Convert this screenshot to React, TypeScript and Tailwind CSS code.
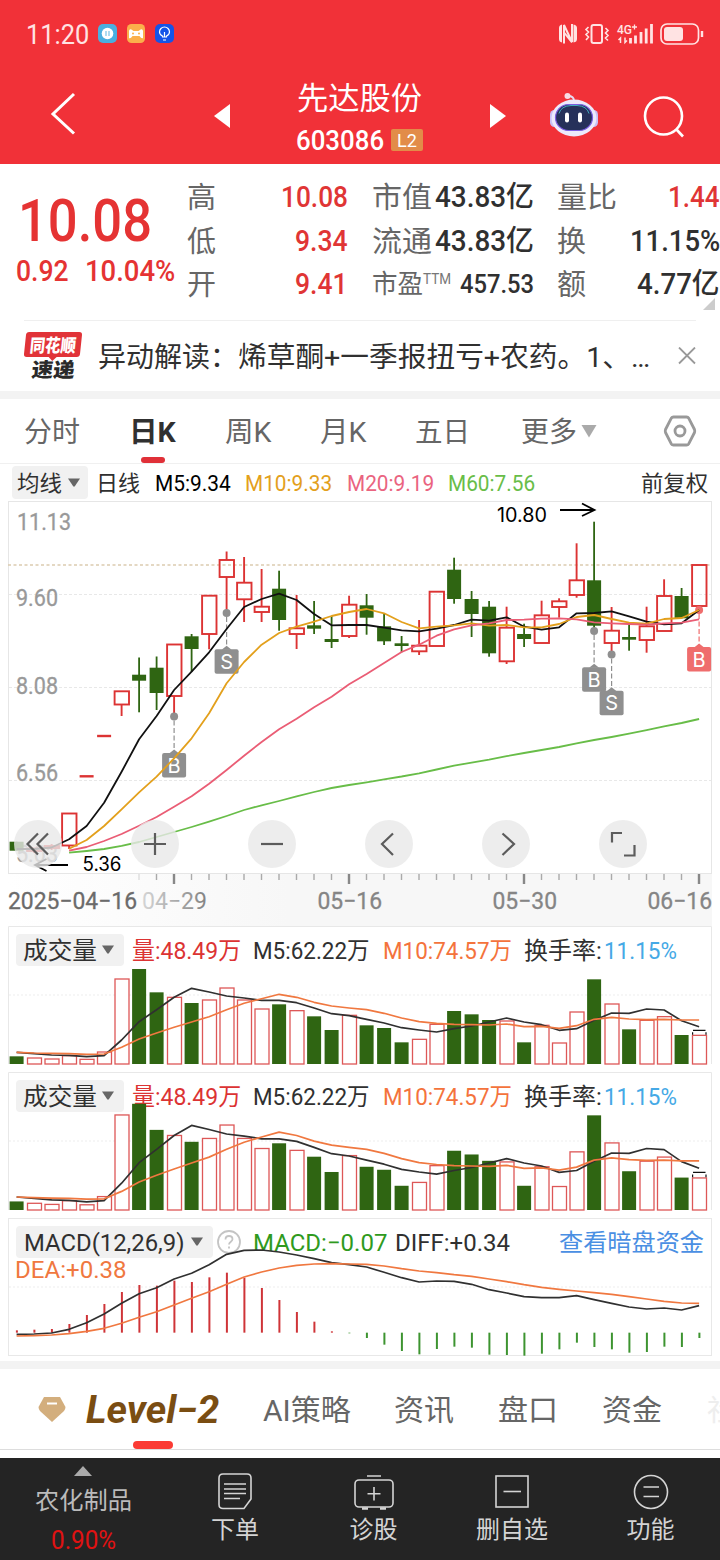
import { useLayoutEffect, useRef, useState, type ReactNode } from "react";

/* Text squeezed or stretched horizontally so that it fills the width of its box. */
function Fit({ className = "", children }: { className?: string; children: ReactNode }) {
  const box = useRef<HTMLSpanElement>(null);
  const text = useRef<HTMLSpanElement>(null);
  const [scale, setScale] = useState(1);
  useLayoutEffect(() => {
    if (box.current && text.current && text.current.offsetWidth > 0) {
      setScale(box.current.clientWidth / text.current.offsetWidth);
    }
  }, []);
  return (
    <span ref={box} className={`block shrink-0 whitespace-nowrap ${className}`}>
      <span ref={text} className="inline-block origin-left translate-y-px align-top" style={{ transform: `scaleX(${scale})` }}>
        {children}
      </span>
    </span>
  );
}

const RED = "#dc3333";
const GREEN = "#2f6512";
const cx = (i: number) => 16.6 + 17.5 * i;
const line = (ys: number[], start = 0) =>
  ys.map((y, i) => `${cx(i + start).toFixed(1)},${y.toFixed(1)}`).join(" ");

/* kind, body top, body bottom, wick top, wick bottom */
type Candle = ["r" | "g", number, number, number, number];
const candles: Candle[] = [
  ["g", 841.7, 850.7, 841.7, 850.7],
  ["r", 848.5, 851, 848, 853],
  ["r", 846, 848, 844, 850],
  ["r", 813.5, 845.5, 813.5, 849],
  ["r", 776.3, 776.3, 776.3, 776.3],
  ["r", 736, 736, 736, 736],
  ["r", 691.3, 704.5, 691.3, 716],
  ["g", 674.7, 680.7, 657.5, 712.3],
  ["g", 667.7, 693, 656.5, 710],
  ["r", 644.5, 696, 644.5, 716.5],
  ["g", 636.3, 649, 634, 672],
  ["r", 595.7, 634, 595.7, 649.3],
  ["r", 560, 577, 551.5, 613],
  ["r", 582.7, 599.3, 557, 622],
  ["r", 606.7, 612, 569, 622],
  ["g", 588.7, 620, 570.7, 630.7],
  ["r", 628.3, 634, 595, 649],
  ["g", 625.3, 628.7, 601, 634],
  ["g", 639, 642, 616, 648],
  ["r", 604.7, 636, 595.7, 638],
  ["g", 605.3, 617.7, 594, 634.7],
  ["g", 626.3, 641.3, 614, 645],
  ["g", 643.3, 646, 636, 652.3],
  ["r", 645.7, 651.3, 620, 655],
  ["r", 591.7, 646, 591.7, 646],
  ["g", 569.7, 599, 557.7, 603.7],
  ["g", 599, 614, 591, 637],
  ["g", 606.7, 653.3, 601, 656.7],
  ["r", 627.7, 661.3, 606.7, 664],
  ["g", 634, 639, 623.7, 647],
  ["r", 615.3, 643, 600.7, 643],
  ["r", 601.3, 607, 598.3, 617.7],
  ["r", 580.3, 595, 543.3, 597.7],
  ["g", 580.3, 625.7, 521.7, 630.7],
  ["r", 630.7, 643, 607, 653.7],
  ["g", 637, 639.7, 624.7, 650.7],
  ["r", 626.3, 640, 606.7, 652.7],
  ["r", 596, 631, 579.3, 631],
  ["g", 596, 618.3, 588, 618.3],
  ["r", 565, 606, 565, 610],
];

const ma5 = [849, 849, 847.5, 839.3, 826, 802.7, 771.7, 739.3, 716, 690, 671.7, 652.3, 629, 607, 599, 593.7, 600, 614, 625.3, 625, 625, 627.7, 630.3, 631.3, 628.7, 625, 619.7, 620.7, 617.3, 626.7, 629.7, 627.3, 613.3, 613, 611.3, 616.3, 621.7, 624.3, 623.3, 610];
const ma10 = [848.7, 840, 826, 809.3, 792.3, 776.7, 758.3, 738.3, 713.3, 683.3, 662, 644.7, 633, 626.7, 621.7, 616, 612, 609, 613.3, 622, 628.3, 626.7, 625.3, 623.3, 625.7, 625, 627.3, 627.3, 624, 617, 615, 619, 622.7, 623.7, 619, 618, 610];
const ma20 = [850.7, 847, 841, 834, 825.7, 817, 806.7, 796.3, 783.7, 770, 755.7, 742, 729.3, 718.7, 707.3, 696.7, 684.3, 674, 663, 652, 644.7, 635.7, 629.3, 625.3, 623.3, 620, 619.7, 618.7, 618.3, 619.3, 622.3, 623.3, 624, 624.7, 623.3, 622.7, 619.3];
const ma60 = [852.7, 851, 849, 845.8, 842, 837, 832, 827, 821.7, 816, 810, 805.3, 801, 796.3, 792, 788, 785, 782.3, 779.3, 776.5, 773.3, 769.5, 765.7, 762.6, 759.7, 756.2, 753, 750, 747, 743.3, 740, 737, 733.7, 730.2, 726.3, 723, 719];

function Marker({ i, y, top, label, color = "#8f8f8f" }: { i: number; y: number; top: number; label: string; color?: string }) {
  const x = cx(i);
  return (
    <g>
      <circle cx={x} cy={y} r="4" fill={color} />
      <line x1={x} x2={x} y1={y + 4} y2={top} stroke={color} strokeWidth="1.2" strokeDasharray="5 2.5" />
      <path d={`M${x - 5} ${top + 0.5}L${x} ${top - 3.5}L${x + 5} ${top + 0.5}Z`} fill={color} />
      <rect x={x - 12} y={top} width="24" height="24.5" rx="2" fill={color} />
      <text x={x} y={top + 19.5} textAnchor="middle" fill="#fff" className="font-[Inter,Roboto,sans-serif] text-[20px]">
        {label}
      </text>
    </g>
  );
}

function PriceChart() {
  const axis: [string, number, number, number][] = [
    ["11.13", 17, 530, 54],
    ["9.60", 16, 606, 42],
    ["8.08", 16, 693.5, 42],
    ["6.56", 16, 780.5, 42],
    ["5.03", 16, 862, 42],
  ];
  const dates: [string, number][] = [["05-16", 317.5], ["05-30", 492.5], ["06-16", 647.5]];
  return (
    <svg viewBox="0 501 720 425" className="block h-[425px] w-full font-[Roboto,sans-serif]">
      <defs>
        <linearGradient id="fade" x1="0" x2="1" y1="0" y2="0">
          <stop offset="0" stopColor="#ffffff" />
          <stop offset="0.4" stopColor="#f7f7f7" />
          <stop offset="1" stopColor="#f7f7f7" />
        </linearGradient>
        <linearGradient id="dateFade" gradientUnits="userSpaceOnUse" x1="140" x2="205" y1="0" y2="0">
          <stop offset="0" stopColor="#d8d8d8" />
          <stop offset="1" stopColor="#858585" />
        </linearGradient>
      </defs>
      <rect x="8" y="874" width="704" height="52" fill="url(#fade)" />
      <rect x="8.5" y="501.5" width="703" height="372" fill="none" stroke="#e6e6e6" />
      {[594.5, 687.5, 780.5].map((y) => (
        <line key={y} x1="9" x2="711" y1={y} y2={y} stroke="#e8e8e8" strokeDasharray="3 2" />
      ))}
      <line x1="8" x2="712" y1="565" y2="565" stroke="#dccbb0" strokeWidth="1.6" strokeDasharray="3 2.5" />
      <g className="text-[23px]" fill="#999" stroke="#999" strokeWidth="0.3">
        {axis.map(([t, x, y, w]) => (
          <text key={t} x={x} y={y} textLength={w} lengthAdjust="spacingAndGlyphs">
            {t}
          </text>
        ))}
      </g>
      {candles.map(([k, t, b, wt, wb], i) => {
        const x = cx(i);
        const color = k === "r" ? RED : GREEN;
        if (k === "g") {
          return (
            <g key={i} fill={color}>
              <rect x={x - 0.9} y={wt} width="1.8" height={wb - wt} />
              <rect x={x - 7} y={t} width="14" height={b - t} />
            </g>
          );
        }
        if (t === b) return <rect key={i} x={x - 7} y={t - 1.2} width="14" height="2.4" fill={color} />;
        return (
          <g key={i} stroke={color} strokeWidth="1.9" fill="none">
            {wt < t && <line x1={x} x2={x} y1={wt} y2={t} />}
            {wb > b && <line x1={x} x2={x} y1={b} y2={wb} />}
            <rect x={x - 7} y={t} width="14.4" height={b - t} />
          </g>
        );
      })}
      <Marker i={12} y={613} top={649.3} label="S" />
      <Marker i={9} y={716.5} top={753} label="B" />
      <Marker i={33} y={631} top={667.3} label="B" />
      <Marker i={34} y={654.5} top={690.8} label="S" />
      <Marker i={39} y={610} top={647} label="B" color="#ef6d6d" />
      <g fill="none" strokeWidth="1.8" strokeLinejoin="round">
        <polyline points={line(ma5)} stroke="#111" />
        <polyline points={line(ma10, 3)} stroke="#e3a01c" />
        <polyline points={line(ma20, 3)} stroke="#ea5d75" />
        <polyline points={line(ma60, 3)} stroke="#68bd48" />
      </g>
      <g stroke="#000" strokeWidth="1.8" fill="none">
        <path d="M560 510H594M582 503.5L594.5 510L582 516" />
        <path d="M68 865H35M46.5 859L35 865L46.5 871" />
      </g>
      <g fill="#000" className="font-[Inter,sans-serif] text-[19.5px]">
        <text x="497" y="521.5" textLength="50" lengthAdjust="spacingAndGlyphs">10.80</text>
        <text x="82.5" y="871" textLength="39" lengthAdjust="spacingAndGlyphs">5.36</text>
      </g>
      {candles.map((_, i) => {
        if (i < 7) return null;
        const major = i % 10 === 9;
        return (
          <rect
            key={i}
            x={cx(i) - (major ? 1.3 : 0.8)}
            y="874"
            width={major ? 2.4 : 1.4}
            height={major ? 10 : 6}
            fill={major ? "#888" : i === 7 ? "#ddd" : "#aaa"}
          />
        );
      })}
      <g className="text-[23px]" fill="#858585">
        <text x="8" y="909" textLength="129" lengthAdjust="spacingAndGlyphs" fill="#6b6b6b" stroke="#6b6b6b" strokeWidth="0.3">2025−04−16</text>
        <text x="142" y="909" textLength="65" lengthAdjust="spacingAndGlyphs" fill="url(#dateFade)">04−29</text>
        {dates.map(([t, x]) => (
          <text key={t} x={x} y="909" textLength="64.5" lengthAdjust="spacingAndGlyphs" stroke="#858585" strokeWidth="0.3">
            {t.replace("-", "−")}
          </text>
        ))}
      </g>
    </svg>
  );
}

function ChartButton({ d }: { d: string }) {
  return (
    <button className="flex size-12 items-center justify-center rounded-full bg-[#e8e8e8]/80">
      <svg viewBox="0 0 48 48" className="size-12" fill="none" stroke="#5c5c5c" strokeWidth="2.2">
        <path d={d} />
      </svg>
    </button>
  );
}

/* Bar tops and moving averages, in thirds of a pixel below the panel's upper edge. */
const VOL_BASE = 432;
const volKinds = "grrrrrrggrgrrrrgrggrgggrrgggrgrrrgrgrrgr";
const volTops = [409, 414, 417, 407, 418, 396, 177, 147, 217, 232, 249, 240, 204, 240, 267, 253, 272, 289, 330, 286, 316, 324, 367, 358, 313, 273, 283, 300, 303, 367, 316, 369, 276, 178, 252, 328, 301, 290, 345, 346];
const volMa5 = [397, 401, 405, 406, 410, 407, 360, 305, 269, 232, 205, 216, 228, 234, 241, 241, 248, 264, 281, 287, 298, 309, 323, 330, 336, 326, 318, 306, 294, 306, 314, 331, 326, 301, 279, 280, 267, 270, 302, 320];
const volMa10 = [397, 399, 400, 401, 403, 402, 382, 357, 339, 322, 306, 290, 269, 250, 236, 223, 232, 247, 258, 264, 269, 280, 294, 305, 310, 313, 314, 315, 312, 320, 319, 325, 317, 298, 292, 297, 299, 298, 300, 300];

function VolumePanel({ scale }: { scale: number }) {
  const base = 138;
  const at = (v: number) => base - ((VOL_BASE - v) / 3) * scale;
  return (
    <section className="relative h-[146px] pt-2">
      <div className="flex h-8 items-center text-[24px] leading-8 text-[#303030]">
        <div className="ml-4 flex h-8 w-[108px] items-center rounded bg-[#f1f1f1] pl-[7px]">
          <Fit className="w-[74px]">成交量</Fit>
          <Caret className="ml-[4px]" />
        </div>
        <Fit className="ml-2 w-[109px] text-[#dc3333]">量:48.49万</Fit>
        <Fit className="ml-[12px] w-[117px]">M5:62.22万</Fit>
        <Fit className="ml-[13px] w-[129px] text-[#f4733c]">M10:74.57万</Fit>
        <Fit className="ml-[12px] w-[78px]">换手率:</Fit>
        <Fit className="ml-[2px] w-[73px] text-[#45a9e6]">11.15%</Fit>
      </div>
      <svg viewBox="0 0 720 146" className="absolute inset-0 h-[146px] w-full">
        <path d="M8.5 138V0.5H711.5V138" fill="none" stroke="#e8e8e8" />
        <line x1="9" x2="711" y1="69" y2="69" stroke="#ededed" strokeDasharray="2 2" />
        {volTops.map((v, i) =>
          volKinds[i] === "g" ? (
            <rect key={i} x={cx(i) - 7} y={at(v)} width="14" height={base - at(v)} fill={GREEN} />
          ) : (
            <rect key={i} x={cx(i) - 6.6} y={at(v)} width="14" height={base - at(v)} fill="#fff" stroke="#dd5757" strokeWidth="1.3" />
          ),
        )}
        <path d={`M692.6 ${at(344)}V${at(337)}M706 ${at(344)}V${at(337)}M693 ${at(331)}H705.5`} stroke="#111" strokeWidth="1.2" />
        <g fill="none" strokeWidth="1.7" strokeLinejoin="round">
          <polyline points={line(volMa5.map(at))} stroke="#303030" />
          <polyline points={line(volMa10.map(at))} stroke="#f07840" />
        </g>
      </svg>
    </section>
  );
}

const macdTops = [346, 344, 342, 327, 300, 267, 231, 210, 212, 197, 201, 187, 173, 188, 219, 255, 291, 320, 349, 355, 369, 389, 408, 418, 402, 395, 398, 419, 420, 422, 416, 403, 383, 396, 403, 413, 411, 395, 396, 369];
const diff = [358, 357, 354, 343, 323, 297, 265, 236, 218, 192, 175, 149, 118, 106, 105, 111, 120, 131, 143, 149, 156, 172, 188, 201, 198, 199, 208, 224, 234, 245, 248, 248, 242, 254, 265, 276, 282, 279, 285, 272];
const dea = [363, 362, 360, 356, 349, 340, 325, 307, 290, 270, 250, 230, 208, 186, 171, 159, 151, 147, 146, 147, 148, 153, 161, 168, 173, 179, 184, 192, 200, 209, 217, 223, 228, 233, 238, 245, 252, 259, 264, 265];

function MacdPanel() {
  const at = (v: number) => v / 3 - 3;
  return (
    <section className="relative h-[143px] pt-2">
      <div className="flex h-8 items-center text-[24px] leading-8 text-[#303030]">
        <div className="ml-4 flex h-8 w-[197px] items-center rounded bg-[#f1f1f1] pl-2">
          <Fit className="w-[161px]">MACD(12,26,9)</Fit>
          <Caret className="ml-[5px]" />
        </div>
        <svg viewBox="0 0 24 24" className="ml-1 size-6 shrink-0" fill="none" stroke="#c4c4c4" strokeWidth="1.8">
          <circle cx="12" cy="12" r="11" />
          <path d="M8.5 9.5C8.5 7.3 10 6 12 6S15.5 7.3 15.5 9.2C15.5 11.6 12 11.8 12 14.5M12 16.5V18.4" />
        </svg>
        <Fit className="ml-3 w-[134px] text-[#2f9a20]">MACD:−0.07</Fit>
        <Fit className="ml-[8px] w-[115px]">DIFF:+0.34</Fit>
        <Fit className="ml-[49px] w-[145px] text-[#4a8fe3]">查看暗盘资金</Fit>
      </div>
      <Fit className="ml-[15px] w-[112px] text-[23px] leading-[23px] text-[#f07840]">DEA:+0.38</Fit>
      <svg viewBox="0 0 720 143" className="absolute inset-0 h-[143px] w-full">
        <rect x="8.5" y="0.5" width="703" height="137" fill="none" stroke="#e8e8e8" />
        <line x1="9" x2="711" y1="69" y2="69" stroke="#ededed" strokeDasharray="2 2" />
        {macdTops.map((v, i) => (
          <line key={i} x1={cx(i) + 0.3} x2={cx(i) + 0.3} y1={at(353)} y2={at(v)} stroke={v < 353 ? "#cf3438" : "#3d9430"} strokeWidth="2" />
        ))}
        <g fill="none" strokeWidth="1.7" strokeLinejoin="round">
          <polyline points={line(diff.map(at))} stroke="#303030" />
          <polyline points={line(dea.map(at))} stroke="#f07840" />
        </g>
      </svg>
    </section>
  );
}

function Caret({ className = "" }: { className?: string }) {
  return (
    <svg viewBox="0 0 14 10" className={`h-[10px] w-[14px] shrink-0 ${className}`}>
      <path d="M1 0.5H13L8 8.1Q7 9.3 6 8.1Z" fill="#666" />
    </svg>
  );
}

function StatusBar() {
  return (
    <div className="flex h-[68px] items-center text-[#ffe3e3]">
      <Fit className="ml-[26px] w-[63px] text-[27px] leading-8">11:20</Fit>
      <svg viewBox="0 0 76 20" className="ml-[9px] h-5 w-[76px]">
        <rect width="19" height="19" rx="5" fill="#4aafe0" />
        <circle cx="9.5" cy="9.5" r="5.8" fill="#fff" />
        <path d="M8 7V12M11 7V12" stroke="#8ecdea" strokeWidth="1.4" />
        <rect x="29" width="18" height="19" rx="4.5" fill="#fbb04b" />
        <path d="M31 14V7Q31 5 33 5.2L35.5 7H40.5L43 5.2Q45 5 45 7V14Q43.5 15 41.5 12H34.5Q32.5 15 31 14Z" fill="#fff" />
        <circle cx="35" cy="9.5" r="1" fill="#fbb04b" />
        <circle cx="41" cy="9.5" r="1" fill="#fbb04b" />
        <rect x="57" width="19" height="19" rx="5" fill="#1554e8" />
        <path d="M64.5 13V12Q61.5 10.5 61.5 8A5 5 0 0 1 71.5 8Q71.5 10.5 68.5 12V13ZM66.5 13V8M65 16H68" fill="none" stroke="#fff" strokeWidth="1.2" />
      </svg>
      <svg viewBox="558 22 148 24" className="ml-[384px] h-6 w-[148px]" fill="none" stroke="currentColor" strokeWidth="2">
        <path d="M559 28Q559 25 562 24.5V42.5Q559 42 559 39ZM577 28Q577 25 573.5 24.5V42.5Q577 42 577 39Z" fill="currentColor" stroke="none" />
        <path d="M564 43.5V25L572 42V24M564.5 33L572 42.5" />
        <rect x="591.5" y="25" width="10.5" height="18" rx="2" />
        <path d="M588.5 27L586 29.5L588.5 32L586 34.5L588.5 37L586 40M605.5 28L608 30.5L605.5 33L608 35.5L605.5 38L608 40.5" strokeWidth="1.6" />
        <path d="M620.5 43V38L618.5 40M625 37.5V42.5L627 40.5" strokeWidth="1.5" />
        <path d="M630.5 38V43.5M635.5 35.5V43.5M641 32V43.5M646.2 28.5V43.5M651.5 24V43.5" strokeWidth="2.8" />
        <text x="617" y="34" textLength="15" lengthAdjust="spacingAndGlyphs" fill="currentColor" stroke="none" className="font-[Roboto,sans-serif] text-[13px] font-medium">4G</text>
        <path d="M632 27H637M634.5 24.5V29.5" strokeWidth="1.3" />
        <rect x="661" y="24" width="37.5" height="20" rx="6" strokeWidth="1.7" />
        <rect x="664" y="27" width="19" height="14" rx="3" fill="currentColor" stroke="none" />
        <path d="M702 31V37" strokeWidth="2.4" />
      </svg>
    </div>
  );
}

function Header() {
  return (
    <div className="flex h-24 items-start text-white">
      <svg viewBox="0 0 28 44" className="ml-[50px] mt-6 h-[44px] w-7" fill="none" stroke="#fff" strokeWidth="3">
        <path d="M24 2L3 22L24 41.5" />
      </svg>
      <svg viewBox="0 0 16 24" className="ml-[136px] mt-[36px] h-6 w-4">
        <path d="M16 0V24L0 12Z" fill="#fff" />
      </svg>
      <div className="ml-[67px] mt-3 w-[127px]">
        <Fit className="w-[125px] text-[31px] leading-[36px]">先达股份</Fit>
        <div className="-ml-px mt-[12px] flex items-center">
          <Fit className="w-[88px] text-[27px] font-medium leading-6">603086</Fit>
          <span className="ml-[7px] flex h-[22px] w-8 items-center justify-center rounded-[2px] bg-[#e28c49] text-[19px] leading-[22px]">
            <Fit className="w-5">L2</Fit>
          </span>
        </div>
      </div>
      <svg viewBox="0 0 16 24" className="ml-[66px] mt-[36px] h-6 w-4">
        <path d="M0 0V24L16 12Z" fill="#fff" />
      </svg>
      <svg viewBox="0 0 50 46" className="ml-[43px] mt-6 h-[46px] w-[50px]">
        <path d="M25 9Q25 4 19 4" fill="none" stroke="#e4dcf4" strokeWidth="1.8" />
        <circle cx="18.5" cy="4" r="3" fill="#f8dce4" />
        <rect x="1" y="18" width="9" height="17" rx="4.5" fill="#c9bff5" />
        <rect x="40" y="18" width="9" height="17" rx="4.5" fill="#c9bff5" />
        <ellipse cx="25" cy="26" rx="22.5" ry="18.5" fill="#ece9fb" />
        <rect x="6.5" y="12.5" width="37" height="26" rx="13" fill="#26315a" stroke="#7b5de0" strokeWidth="1.2" />
        <path d="M10 21.5Q12 14 22 13.500H28Q38 14 40 21.5" fill="none" stroke="#49c6d8" strokeWidth="0.8" />
        <rect x="16" y="20.5" width="4" height="10" rx="2" fill="#fff" />
        <rect x="29" y="20.5" width="4" height="10" rx="2" fill="#fff" />
      </svg>
      <svg viewBox="0 0 44 44" className="ml-[44px] mt-[26px] size-11" fill="none" stroke="#fff" strokeWidth="2.6">
        <circle cx="20.5" cy="22" r="18.5" />
        <path d="M33 35L40 42.5" />
      </svg>
    </div>
  );
}

function Quote() {
  return (
    <section className="relative flex h-[156px] text-[#303030]">
      <div className="w-[187px] text-[#e53333]">
        <Fit className="ml-[18px] mt-[26px] w-[134px] text-[60px] font-medium leading-[60px]">10.08</Fit>
        <div className="mt-[5px] flex text-[29px] leading-[30px]">
          <Fit className="ml-4 w-[53px] font-medium">0.92</Fit>
          <Fit className="ml-[16px] w-[90px] font-medium">10.04%</Fit>
        </div>
      </div>
      <div className="w-[161px] pt-[11px] text-[29px] leading-[43.5px]">
        <div className="flex justify-between"><Label1>高</Label1><Fit className="w-[67px] font-medium text-[#e03535]">10.08</Fit></div>
        <div className="flex justify-between"><Label1>低</Label1><Fit className="w-[53px] font-medium text-[#e03535]">9.34</Fit></div>
        <div className="flex justify-between"><Label1>开</Label1><Fit className="w-[53px] font-medium text-[#e03535]">9.41</Fit></div>
      </div>
      <div className="ml-6 w-[162px] pt-[11px] text-[29px] leading-[43.5px]">
        <div className="flex justify-between"><Label2>市值</Label2><Fit className="w-[99px] font-medium">43.83亿</Fit></div>
        <div className="flex justify-between"><Label2>流通</Label2><Fit className="w-[99px] font-medium">43.83亿</Fit></div>
        <div className="flex">
          <Fit className="w-[51px] text-[26px] text-[#666]">市盈</Fit>
          <Fit className="w-[28px] text-[15px] leading-[33px] text-[#777]">TTM</Fit>
          <Fit className="ml-[9px] w-[74px] text-[26px] font-medium">457.53</Fit>
        </div>
      </div>
      <div className="ml-[23px] w-[163px] pt-[11px] text-[29px] leading-[43.5px]">
        <div className="flex justify-between"><Label2>量比</Label2><Fit className="w-[52px] font-medium text-[#e03535]">1.44</Fit></div>
        <div className="flex justify-between"><Label1>换</Label1><Fit className="w-[90px] font-medium">11.15%</Fit></div>
        <div className="flex justify-between"><Label1>额</Label1><Fit className="w-[83px] font-medium">4.77亿</Fit></div>
      </div>
      <svg viewBox="0 0 12 12" className="absolute bottom-[10px] right-[5px] size-3">
        <path d="M12 0V12H0Z" fill="#ccc" />
      </svg>
    </section>
  );
}

function Label1({ children }: { children: ReactNode }) {
  return <Fit className="-mb-px w-[29px] pt-px text-[#666]">{children}</Fit>;
}
function Label2({ children }: { children: ReactNode }) {
  return <Fit className="-mb-px w-[60px] pt-px text-[#666]">{children}</Fit>;
}

function News() {
  return (
    <section className="mx-6 flex h-[71px] items-center border-t border-[#efefef]">
      <div className="flex h-12 w-[60px] flex-col items-center font-black">
        <div className="relative flex h-[25px] w-[56px] -skew-x-6 items-center justify-center rounded-[3px] bg-[#e13338] text-white">
          <Fit className="w-[46px] text-[18px] leading-[23px]">同花顺</Fit>
          <svg viewBox="0 0 10 5" className="absolute -bottom-1 left-6 h-[5px] w-[10px]"><path d="M0 0H10L5 5Z" fill="#e13338" /></svg>
        </div>
        <div className="-skew-x-6">
          <Fit className="mt-px w-[43px] text-[20px] leading-[22px] text-[#2a2a2a]">速递</Fit>
        </div>
      </div>
      <Fit className="ml-4 w-[140px] pt-px text-[28px] leading-[36px] text-[#303030]">异动解读：</Fit>
      <Fit className="w-[412px] pt-px text-[28px] leading-[36px] text-[#303030]">烯草酮+一季报扭亏+农药。1、…</Fit>
      <svg viewBox="0 0 18 18" className="ml-7 size-[18px] shrink-0" stroke="#999" strokeWidth="1.8"><path d="M1 0.5L17 16.5M17 0.5L1 16.5" /></svg>
    </section>
  );
}

function PeriodTabs() {
  return (
    <nav className="flex h-[65px] items-center border-b border-[#f0f0f0] pb-px text-[28px] leading-10 text-[#666]">
      <Fit className="ml-6 w-[56px] pt-[2px]">分时</Fit>
      <div className="relative ml-[49px]">
        <Fit className="w-[47px] pt-[2px] font-bold text-[#303030]">日K</Fit>
        <span className="absolute -bottom-[11px] left-[12px] h-[6px] w-6 rounded-[3px] bg-[#e03038]" />
      </div>
      <Fit className="ml-[49px] w-[47px] pt-[2px]">周K</Fit>
      <Fit className="ml-[48px] w-[47px] pt-[2px]">月K</Fit>
      <Fit className="ml-[48px] w-[55px] pt-[2px]">五日</Fit>
      <Fit className="ml-[51px] w-[56px] pt-[2px]">更多</Fit>
      <svg viewBox="0 0 16 14" className="ml-1 h-[14px] w-4"><path d="M0.5 1H15.5L8 13.5Z" fill="#aaa" /></svg>
      <svg viewBox="0 0 34 32" className="ml-[66px] h-8 w-[34px]" fill="none" stroke="#999" strokeWidth="2.8" strokeLinejoin="round">
        <path d="M10.5 2H23.5Q25 2 25.8 3.3L31.5 14.5Q32 16 31.5 17.5L25.8 28.7Q25 30 23.5 30H10.5Q9 30 8.2 28.7L2.5 17.5Q2 16 2.5 14.5L8.2 3.3Q9 2 10.5 2Z" />
        <circle cx="17" cy="16" r="5" />
      </svg>
    </nav>
  );
}

function Averages() {
  return (
    <div className="flex h-[37px] items-center text-[22px] leading-8 text-[#303030]">
      <div className="ml-3 flex h-[33px] w-[76px] items-center rounded bg-[#f1f1f1] pl-[5px]">
        <Fit className="w-[45px]">均线</Fit>
        <Caret className="ml-[5px]" />
      </div>
      <Fit className="ml-2 w-[44px]">日线</Fit>
      <Fit className="ml-[15px] w-[76px] text-black">M5:9.34</Fit>
      <Fit className="ml-[14px] w-[87px] text-[#e3a01c]">M10:9.33</Fit>
      <Fit className="ml-[15px] w-[87px] text-[#ea6480]">M20:9.19</Fit>
      <Fit className="ml-[14px] w-[87px] text-[#68bd48]">M60:7.56</Fit>
      <Fit className="ml-[106px] w-[67px]">前复权</Fit>
    </div>
  );
}

function DetailTabs() {
  return (
    <nav className="relative flex h-[81px] items-center overflow-hidden border-b border-[#ddd] text-[29px] leading-10 text-[#666]">
      <svg viewBox="0 0 28 25" className="ml-[38px] h-[25px] w-7 shrink-0">
        <path d="M6 0H22L27.5 10Q27.5 12 26 14L14 25L2 14Q0.5 12 0.5 10Z" fill="#d3ae7d" />
        <path d="M9 6.5H19" stroke="#fff" strokeWidth="2" />
      </svg>
      <Fit className="ml-5 w-[133px] text-[38px] font-bold italic text-[#7a4d12]">Level−2</Fit>
      <Fit className="ml-[44px] w-[88px] pt-px">AI策略</Fit>
      <Fit className="ml-[43px] w-[60px] pt-px">资讯</Fit>
      <Fit className="ml-[44px] w-[60px] pt-px">盘口</Fit>
      <Fit className="ml-[44px] w-[60px] pt-px">资金</Fit>
      <Fit className="ml-[45px] w-[59px] pt-px text-[#eee]">社区</Fit>
      <span className="absolute bottom-0 left-[133px] h-2 w-10 rounded-[4px] bg-[#fb3b34]" />
    </nav>
  );
}

function ToolItem({ label, width, children }: { label: string; width: string; children: ReactNode }) {
  return (
    <div className="flex flex-col items-center pt-[14px]">
      <svg viewBox="0 0 40 38" className="h-[38px] w-10" fill="none" stroke="#d4d4d4" strokeWidth="1.6">{children}</svg>
      <Fit className={`mt-[3px] text-[24px] leading-8 ${width}`}>{label}</Fit>
    </div>
  );
}

function Toolbar() {
  return (
    <footer className="grid h-[102px] grid-cols-[166px_138px_139px_138px_139px] bg-[#242424] text-[#d4d4d4]">
      <div className="flex flex-col items-center">
        <svg viewBox="0 0 18 10" className="mt-2 h-[10px] w-[18px]"><path d="M9 0L18 10H0Z" fill="#aaa" /></svg>
        <Fit className="mt-[8px] w-[97px] text-[24px] leading-8 text-[#bbb]">农化制品</Fit>
        <Fit className="mt-[8px] w-[65px] text-[25px] leading-8 text-[#e01212]">0.90%</Fit>
      </div>
      <ToolItem label="下单" width="w-[48px]">
        <path d="M8 2H32Q36 2 36 6V27L29 36.5H8Q4 36.5 4 32.5V6Q4 2 8 2ZM9 12H31M9 17H31M9 21.5H31M9 26.5H25" />
      </ToolItem>
      <ToolItem label="诊股" width="w-[48px]">
        <rect x="1" y="8" width="38" height="27" rx="4" />
        <path d="M13 4H27M20 15V28.5M13.5 21.7H26.5" />
        <path d="M8 36.5H14M26 36.5H32" strokeWidth="2.5" />
      </ToolItem>
      <ToolItem label="删自选" width="w-[72px]">
        <rect x="4" y="4" width="32" height="31" />
        <path d="M11.5 19.5H29" />
      </ToolItem>
      <ToolItem label="功能" width="w-[48px]">
        <circle cx="20" cy="20" r="16.5" />
        <path d="M12.5 15H28M12.5 24.5H28" />
      </ToolItem>
    </footer>
  );
}

export default function App() {
  return (
    <main className="h-[1560px] w-[720px] overflow-hidden bg-white font-[Roboto,'Noto_Sans_CJK_SC',sans-serif]">
      <header className="h-[164px] bg-[#f13138]">
        <StatusBar />
        <Header />
      </header>
      <Quote />
      <News />
      <div className="h-2 bg-[#f3f3f3]" />
      <PeriodTabs />
      <Averages />
      <section className="relative h-[425px]">
        <PriceChart />
        <div className="absolute left-[14px] top-[319px] flex gap-[69px]">
          <ChartButton d="M24 13.5L13.5 24L24 34.5M34 13.5L23.5 24L34 34.5" />
          <ChartButton d="M13 24H35M24 13V35" />
          <ChartButton d="M13 24H35" />
          <ChartButton d="M28 13.5L17 24L28 35" />
          <ChartButton d="M20.5 13.5L32 24L20.5 35" />
          <ChartButton d="M13 22.5V13H23M35.5 25V35.5H25" />
        </div>
      </section>
      <VolumePanel scale={1} />
      <VolumePanel scale={1.118} />
      <MacdPanel />
      <div className="h-2 bg-[#f3f3f3]" />
      <DetailTabs />
      <div className="h-2" />
      <Toolbar />
    </main>
  );
}
